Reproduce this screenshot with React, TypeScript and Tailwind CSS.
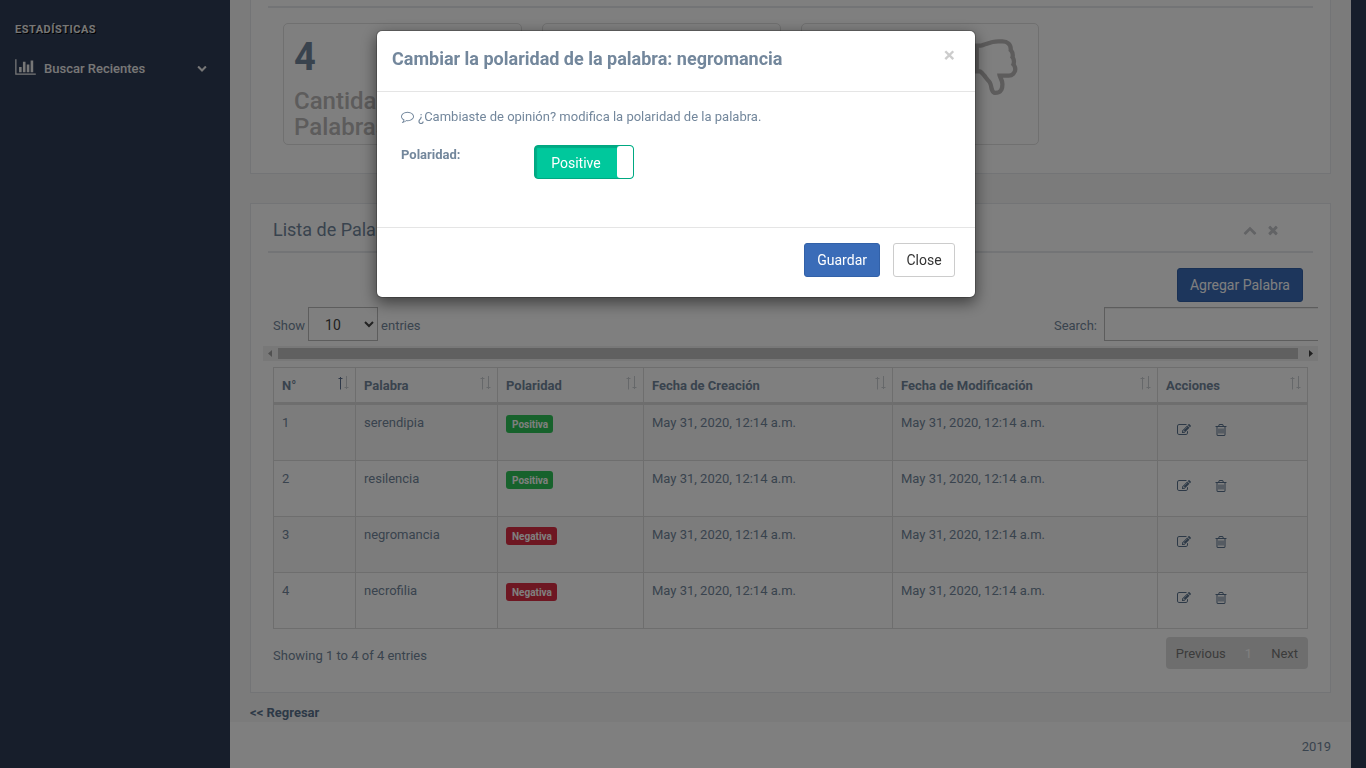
import React from "react";

type GlyphProps = { d: string; className?: string; viewBox?: string };

function Glyph({ d, className, viewBox = "0 0 1792 1792" }: GlyphProps) {
  return (
    <svg viewBox={viewBox} className={className} fill="currentColor" aria-hidden="true">
      <path d={d} />
    </svg>
  );
}

const BAR_CHART =
  "M640 896v512h-256v-512h256zm384-512v1024h-256v-1024h256zm1024 1152v128h-2048v-1536h128v1408h1920zm-640-896v768h-256v-768h256zm384-384v1152h-256v-1152h256z";
const CHEVRON_DOWN =
  "M1683 808l-742 741q-19 19-45 19t-45-19l-742-741q-19-19-19-45.5t19-45.5l166-165q19-19 45-19t45 19l531 531 531-531q19-19 45-19t45 19l166 165q19 19 19 45.5t-19 45.5z";
const CHEVRON_UP =
  "M1683 1331l-166 165q-19 19-45 19t-45-19l-531-531-531 531q-19 19-45 19t-45-19l-166-165q-19-19-19-45.5t19-45.5l742-741q19-19 45-19t45 19l742 741q19 19 19 45.5t-19 45.5z";
const CROSS =
  "M1490 1322q0 40-28 68l-136 136q-28 28-68 28t-68-28l-294-294-294 294q-28 28-68 28t-68-28l-136-136q-28-28-28-68t28-68l294-294-294-294q-28-28-28-68t28-68l136-136q28-28 68-28t68 28l294 294 294-294q28-28 68-28t68 28l136 136q28 28 28 68t-28 68l-294 294 294 294q28 28 28 68z";
const EDIT =
  "M888 1184l116-116-152-152-116 116v56h96v96h56zm440-720q-16-16-33 1l-350 350q-17 17-1 33t33-1l350-350q17-17 1-33zm80 594v190q0 119-84.5 203.5t-203.5 84.5h-832q-119 0-203.5-84.5t-84.5-203.5v-832q0-119 84.5-203.5t203.5-84.5h832q63 0 117 25 15 7 18 23 3 17-9 29l-49 49q-14 14-32 8-23-6-45-6h-832q-66 0-113 47t-47 113v832q0 66 47 113t113 47h832q66 0 113-47t47-113v-126q0-13 9-22l64-64q15-15 35-7t20 29zm-96-738l288 288-672 672h-288v-288zm444 132l-92 92-288-288 92-92q28-28 68-28t68 28l152 152q28 28 28 68t-28 68z";
const TRASH =
  "M704 736v576q0 14-9 23t-23 9h-64q-14 0-23-9t-9-23v-576q0-14 9-23t23-9h64q14 0 23 9t9 23zm256 0v576q0 14-9 23t-23 9h-64q-14 0-23-9t-9-23v-576q0-14 9-23t23-9h64q14 0 23 9t9 23zm256 0v576q0 14-9 23t-23 9h-64q-14 0-23-9t-9-23v-576q0-14 9-23t23-9h64q14 0 23 9t9 23zm128 724v-948h-896v948q0 22 7 40.5t14.5 27 10.5 8.5h832q3 0 10.5-8.5t14.5-27 7-40.5zm-672-1076h448l-48-117q-7-9-17-11h-317q-10 2-17 11zm928 32v64q0 14-9 23t-23 9h-96v948q0 83-47 143.5t-113 60.5h-832q-66 0-113-58.5t-47-141.5v-952h-96q-14 0-23-9t-9-23v-64q0-14 9-23t23-9h309l70-167q15-37 54-63t79-26h320q40 0 79 26t54 63l70 167h309q14 0 23 9t9 23z";
const COMMENT =
  "M896 384q-204 0-381.5 69.5t-282 187.5-104.5 255q0 112 71.5 213.5t201.5 175.5l87 50-27 96q-24 91-70 172 152-63 275-171l43-38 57 6q69 8 130 8 204 0 381.5-69.5t282-187.5 104.5-255-104.5-255-282-187.5-381.5-69.5zm896 512q0 174-120 321.5t-326 233-450 85.5q-70 0-145-8-198 175-460 242-49 14-114 22h-5q-15 0-27-10.5t-16-27.5v-1q-3-4-.5-12t2-10 4.5-9.5l6-9 7-8.5 8-9q7-8 31-34.5t34.5-38 31-39.5 32.5-51 27-59 26-76q-157-89-247.5-220t-90.5-281q0-130 71-248.5t191-204.5 286-136.5 348-50.5 348 50.5 286 136.5 191 204.5 71 248.5z";
const THUMBS_DOWN =
  "M256 448q0-26-19-45t-45-19-45 19-19 45 19 45 45 19 45-19 19-45zm1152 576q0-35-21.5-81t-53.5-47q15-17 25-47.5t10-55.5q0-69-53-119 18-31 18-69 0-37-17.5-73.5t-47.5-52.5q5-30 5-56 0-85-49-126t-136-41h-128q-131 0-342 73-5 2-29 10.5t-35.5 12.5-35 11.5-38 11-33 6.5-31.5 3h-32v640h32q16 0 35.5 9t40 27 38.5 35.5 40 44 34.5 42.5 31.5 41 23 30q55 68 77 91 41 43 59.5 109.5t30.5 125.5 38 85q96 0 128-47t32-145q0-59-48-160.5t-48-159.5h352q50 0 89-38.5t39-89.5zm128 1q0 103-76 179t-180 76h-176q48 99 48 192 0 118-35 186-35 69-102 101.5t-151 32.5q-51 0-90-37-34-33-54-82t-25.5-90.5-17.5-84.5-31-64q-48-50-107-127-101-131-137-155h-274q-53 0-90.5-37.5t-37.5-90.5v-640q0-53 37.5-90.5t90.5-37.5h288q22 0 138-40 128-44 223-66t200-22h112q140 0 226.5 79t85.5 216v5q60 77 60 178 0 22-3 43 38 67 38 145 0 36-9 69 49 73 49 163z";

type Stat = { id: string; value?: number; label?: string; icon?: string };

const stats: Stat[] = [
  { id: "total", value: 4, label: "Cantidad Palabras" },
  { id: "positive" },
  { id: "negative", icon: THUMBS_DOWN },
];

const columns = [
  { label: "N°", width: "w-[82px]" },
  { label: "Palabra", width: "w-[142px]" },
  { label: "Polaridad", width: "w-[146px]" },
  { label: "Fecha de Creación", width: "w-[249px]" },
  { label: "Fecha de Modificación", width: "w-[265px]" },
  { label: "Acciones", width: "w-[150px]" },
];

const words = [
  { id: 1, word: "serendipia", positive: true },
  { id: 2, word: "resilencia", positive: true },
  { id: 3, word: "negromancia", positive: false },
  { id: 4, word: "necrofilia", positive: false },
];

const STAMP = "May 31, 2020, 12:14 a.m.";

function SortArrows({ active }: { active: boolean }) {
  return (
    <svg viewBox="0 0 12 14" className="h-[14px] w-[12px] shrink-0" fill="none" aria-hidden="true">
      <g stroke={active ? "#5d7191" : "#cdd0d5"}>
        <path d="M3.5 1V13.500" />
        <path d="M1.5 2.500H5.500" />
      </g>
      <g stroke="#cdd0d5">
        <path d="M9.5 0V13" />
        <path d="M7.5 11.500H11.500" />
      </g>
    </svg>
  );
}

function Sidebar() {
  return (
    <aside className="w-[230px] shrink-0 pt-[21px] text-[#eeeeee]">
      <h3 className="px-[15px] text-[11px] leading-[18px] font-bold tracking-[0.5px] uppercase [text-shadow:1px_1px_#000]">
        Estadísticas
      </h3>
      <nav className="mt-[11px]">
        <a href="#recientes" className="flex h-[36px] items-center pr-[23px] pl-[15px] text-[13px] font-medium">
          <Glyph d={BAR_CHART} viewBox="0 0 2048 1792" className="mb-[3px] h-[18px] w-[21px]" />
          <span className="ml-2 flex-1">Buscar Recientes</span>
          <Glyph d={CHEVRON_DOWN} className="h-[10px] w-[10px]" />
        </a>
      </nav>
    </aside>
  );
}

function StatsPanel() {
  return (
    <section className="border border-t-0 border-[#e6e9ed] bg-white px-[17px] pt-[6px] pb-7">
      <div className="border-b-2 border-[#e6e9ed]" />
      <div className="mx-[5px] mt-[15px] grid grid-cols-4">
        {stats.map((s) => (
          <div key={s.id} className="px-[10px]">
            <div className="relative h-[122px] overflow-hidden rounded-[5px] border border-[#e0e0e0] px-[10px]">
              {s.value !== undefined && (
                <div className="pt-[7px] text-[38px] leading-[52px] font-bold">{s.value}</div>
              )}
              {s.label && (
                <h3 className="mt-[5px] w-[120px] text-[24px] leading-[26px] font-medium text-[#bab8b8]">
                  {s.label}
                </h3>
              )}
              {s.icon && (
                <Glyph
                  d={s.icon}
                  className="absolute top-[11px] right-[12px] h-[60px] w-[60px] text-[#bab8b8]"
                />
              )}
            </div>
          </div>
        ))}
      </div>
    </section>
  );
}

function WordsTable() {
  return (
    <table className="w-full table-fixed border-separate border-spacing-0 border-t border-l border-[#dddddd]">
      <thead>
        <tr>
          {columns.map((c, i) => (
            <th
              key={c.label}
              className={`${c.width} h-[37px] border-r border-b-3 border-[#dddddd] pt-0 pr-[6px] pl-2 text-left align-top font-bold`}
            >
              <div className="flex items-start justify-between pt-2">
                <span className="leading-[19px]">{c.label}</span>
                <SortArrows active={i === 0} />
              </div>
            </th>
          ))}
        </tr>
      </thead>
      <tbody>
        {words.map((w) => (
          <tr key={w.id} className="odd:bg-[#f9f9f9] [&>td]:h-[56px] [&>td]:border-r [&>td]:border-b [&>td]:border-[#dddddd] [&>td]:px-2 [&>td]:pt-2 [&>td]:align-top">
            <td>{w.id}</td>
            <td>{w.word}</td>
            <td>
              <span
                className={`${w.positive ? "bg-[#2fc558]" : "bg-[#dc2f45]"} mt-[2px] inline-block rounded-[3px] pt-px pr-[5px] pl-[6px] text-[10px] leading-[17px] font-bold text-white`}
              >
                {w.positive ? "Positiva" : "Negativa"}
              </span>
            </td>
            <td>{STAMP}</td>
            <td>{STAMP}</td>
            <td>
              <div className="-ml-px flex text-[#5a738e]">
                <button type="button" aria-label="Editar" className="flex h-[34px] w-[37px] items-center justify-center">
                  <Glyph d={EDIT} className="h-[14px] w-[14px]" />
                </button>
                <button type="button" aria-label="Eliminar" className="flex h-[34px] w-[37px] items-center justify-center">
                  <Glyph d={TRASH} className="h-[14px] w-[14px]" />
                </button>
              </div>
            </td>
          </tr>
        ))}
      </tbody>
    </table>
  );
}

function WordsPanel() {
  return (
    <section className="mt-[29px] border border-[#e6e9ed] bg-white px-[17px] pb-[23px]">
      <div className="flex h-[49px] items-center justify-between border-b-2 border-[#e6e9ed] pr-[33px] pl-[5px]">
        <h2 className="pt-1 text-[18px] leading-[20px]">Lista de Palabras</h2>
        <div className="flex items-center gap-[9px] pt-1 text-[#c5c7cb]">
          <button type="button" aria-label="Contraer">
            <Glyph d={CHEVRON_UP} className="h-[14px] w-[14px]" />
          </button>
          <button type="button" aria-label="Cerrar panel">
            <Glyph d={CROSS} className="h-[14px] w-[14px]" />
          </button>
        </div>
      </div>
      <div className="mt-[15px] flex justify-end pr-[10px]">
        <button
          type="button"
          className="h-[34px] rounded-[3px] border border-[#3261a8] bg-[#3a6cb8] px-3 text-[14px] text-white"
        >
          Agregar Palabra
        </button>
      </div>
      <div className="-mx-[5px] mt-[5px] overflow-hidden">
        <div className="flex items-center justify-between pl-[10px]">
          <label className="flex items-center gap-[3px]">
            <span className="pt-[3px]">Show</span>
            <select className="h-[34px] w-[70px] border border-[#bbbbbb] bg-white pt-px pl-[12px] text-[14px] text-[#444444]">
              <option>10</option>
              <option>25</option>
              <option>50</option>
            </select>
            <span className="pt-[3px]">entries</span>
          </label>
          <label className="-mr-[26px] flex items-center gap-[7px]">
            <span className="pt-[3px]">Search:</span>
            <input
              type="search"
              className="h-[34px] w-[240px] border border-[#bbbbbb] bg-white px-3 text-[14px] shadow-[inset_0_1px_1px_rgba(0,0,0,0.075)]"
            />
          </label>
        </div>
        <div className="mt-[5px] flex h-[15px] items-center bg-[#f1f1f1]" aria-hidden="true">
          <svg viewBox="0 0 15 15" className="h-[15px] w-[15px]" fill="#a3a3a3">
            <path d="M9 4v7L5 7.500z" />
          </svg>
          <div className="h-[11px] flex-1 bg-[#c1c1c1]" />
          <svg viewBox="0 0 20 15" className="h-[15px] w-[20px]" fill="#404040">
            <path d="M11 4v7l4-3.500z" />
          </svg>
        </div>
      </div>
      <div className="mx-[5px] mt-[6px]">
        <WordsTable />
        <div className="mt-2 flex justify-between">
          <p className="pt-[9px]">Showing 1 to 4 of 4 entries</p>
          <div className="flex h-[32px] rounded-[4px] bg-[#dddddd] text-[#777777]">
            <button type="button" className="px-[10px]">Previous</button>
            <button type="button" className="px-[9px] text-white">1</button>
            <button type="button" className="px-[10px]">Next</button>
          </div>
        </div>
      </div>
    </section>
  );
}

function PolarityDialog() {
  return (
    <div className="fixed inset-0 bg-black/50 pr-[14px]">
      <div
        role="dialog"
        aria-labelledby="dialog-title"
        className="mx-auto mt-[30px] max-w-[600px] rounded-[6px] border border-black/20 bg-white bg-clip-padding shadow-[0_5px_15px_rgba(0,0,0,0.5)]"
      >
        <header className="flex h-[61px] items-start justify-between border-b border-[#e5e5e5] px-[15px]">
          <h4 id="dialog-title" className="pt-[17px] text-[18px] leading-[22px] font-bold">
            Cambiar la polaridad de la palabra: negromancia
          </h4>
          <button
            type="button"
            aria-label="Cerrar"
            className="mt-[13px] mr-[5px] text-[21px] leading-[22px] font-bold text-black/20"
          >
            ×
          </button>
        </header>
        <form>
          <div className="h-[135px] px-6 pt-[15px]">
            <p className="flex items-center gap-1 leading-[20px]">
              <Glyph d={COMMENT} className="mb-px h-[13px] w-[13px]" />
              ¿Cambiaste de opinión? modifica la polaridad de la palabra.
            </p>
            <div className="mt-[18px] flex">
              <label htmlFor="polarity" className="w-[133px] leading-[20px] font-bold">
                Polaridad:
              </label>
              <button
                id="polarity"
                type="button"
                role="switch"
                aria-checked="true"
                className="flex h-[34px] w-[100px] overflow-hidden rounded-[4px] border border-[#00a881] bg-[#00c89c] text-[14px] leading-[32px] text-white"
              >
                <span className="h-full flex-1 pt-px text-center shadow-[inset_2px_2px_1px_rgba(0,0,0,0.15)]">
                  Positive
                </span>
                <span className="h-full w-[16px] rounded-[3px] bg-white" />
              </button>
            </div>
          </div>
          <footer className="flex justify-end gap-[13px] border-t border-[#e5e5e5] px-5 pt-[15px] pb-5 text-[14px]">
            <button
              type="button"
              className="h-[34px] rounded-[3px] border border-[#3261a8] bg-[#3a6cb8] px-3 text-white"
            >
              Guardar
            </button>
            <button
              type="button"
              className="h-[34px] min-w-[62px] rounded-[3px] border border-[#cccccc] bg-white px-3 text-[#333333]"
            >
              Close
            </button>
          </footer>
        </form>
      </div>
    </div>
  );
}

export default function App() {
  return (
    <div className="flex min-h-screen bg-[#2e3c56] pr-[15px] font-['Roboto','Liberation_Sans',sans-serif] text-[13px] leading-[19px] text-[#73879c]">
      <Sidebar />
      <div className="flex min-w-0 flex-1 flex-col bg-[#f7f7f7]">
        <main className="px-5">
          <StatsPanel />
          <WordsPanel />
          <a href="#regresar" className="mt-[10px] block leading-[19px] font-bold text-[#5a738e]">
            &lt;&lt; Regresar
          </a>
        </main>
        <footer className="flex-1 bg-white px-5 pt-[15px] text-right">2019</footer>
      </div>
      <PolarityDialog />
    </div>
  );
}
